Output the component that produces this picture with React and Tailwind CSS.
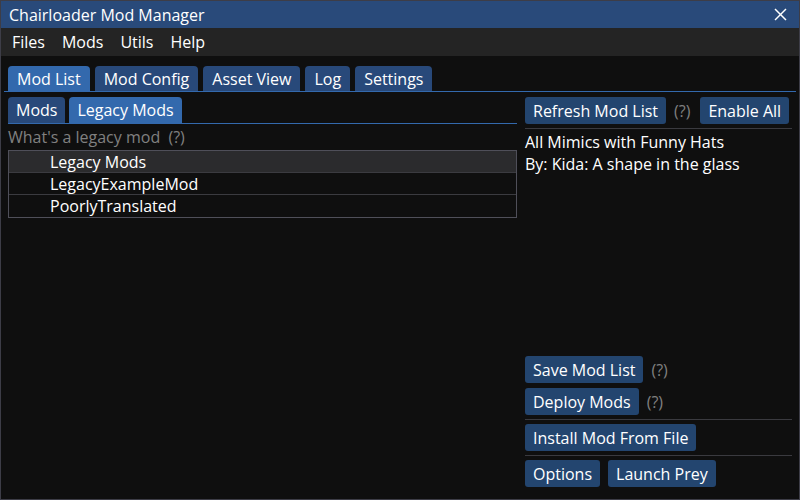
import React from 'react';

const font = { fontFamily: '"Open Sans", "Liberation Sans", sans-serif' };

function Tab({ label, active }) {
  return (
    <div
      className={`h-[25px] px-[9px] flex items-center rounded-t-[4px] text-white ${active ? 'bg-[#3369ad]' : 'bg-[#28497a]'}`}
    >
      {label}
    </div>
  );
}

function Btn({ children }) {
  return (
    <div className="h-[27px] px-2 flex items-center rounded-[3px] bg-[#23456f] text-white whitespace-nowrap">
      {children}
    </div>
  );
}

function Help({ className = 'px-2' }) {
  return <span className={`text-[#808080] ${className}`}>(?)</span>;
}

function Sep() {
  return <div className="h-px bg-[#3a3a3f] my-[4px]" />;
}

export default function App() {
  const rows = ['LegacyExampleMod', 'PoorlyTranslated'];
  return (
    <div className="w-[800px] h-[500px] flex flex-col border border-[#3d3d47] bg-[#0f0f0f] text-[16px] text-white overflow-hidden" style={font}>
      {/* title bar */}
      <div className="h-[27px] shrink-0 bg-[#294a7a] flex items-center justify-between pl-2 pr-3">
        <span>Chairloader Mod Manager</span>
        <svg width="13" height="13" viewBox="0 0 13 13" stroke="#fff" strokeWidth="1.5">
          <line x1="1" y1="1" x2="12" y2="12" />
          <line x1="12" y1="1" x2="1" y2="12" />
        </svg>
      </div>
      {/* menu bar */}
      <div className="h-[28px] shrink-0 bg-[#242424] flex items-center pl-[11px] gap-[17px]">
        <span>Files</span>
        <span>Mods</span>
        <span>Utils</span>
        <span>Help</span>
      </div>
      {/* body */}
      <div className="flex-1 flex flex-col px-[7px] pt-[10px] pb-[12px] min-h-0">
        <div className="flex gap-[5px] border-b border-[#3369ad] -mx-1 px-1">
          <Tab label="Mod List" active />
          <Tab label="Mod Config" />
          <Tab label="Asset View" />
          <Tab label="Log" />
          <Tab label="Settings" />
        </div>
        <div className="flex-1 flex gap-2 pt-[5px] min-h-0">
          {/* left column */}
          <div className="w-[509px] flex flex-col">
            <div className="flex gap-[4px] border-b border-[#3369ad]">
              <div className="h-[26px] px-2 flex items-center rounded-t-[4px] bg-[#28497a]">Mods</div>
              <div className="h-[26px] px-2 flex items-center rounded-t-[4px] bg-[#3369ad]">Legacy Mods</div>
            </div>
            <div className="h-[26px] flex items-center text-[#808080]">What's a legacy mod&nbsp;&nbsp;(?)</div>
            <div className="border border-[#4f4f59]">
              <div className="h-[22px] flex items-center pl-[41px] bg-[#2b2b2d] border-b border-[#3b3b40]">Legacy Mods</div>
              {rows.map((r, i) => (
                <div
                  key={r}
                  className={`h-[22px] flex items-center pl-[41px] ${i === 0 ? 'border-b border-[#3b3b40]' : ''}`}
                >
                  {r}
                </div>
              ))}
            </div>
          </div>
          {/* right column */}
          <div className="flex-1 flex flex-col">
            <div className="flex items-center">
              <Btn>Refresh Mod List</Btn>
              <Help className="pl-2 pr-[10px]" />
              <Btn>Enable All</Btn>
            </div>
            <Sep />
            <div className="leading-[22px] -mt-[2px]">
              <div>All Mimics with Funny Hats</div>
              <div>By: Kida: A shape in the glass</div>
            </div>
            <div className="flex-1" />
            <div className="flex items-center">
              <Btn>Save Mod List</Btn>
              <Help />
            </div>
            <div className="flex items-center mt-[5px]">
              <Btn>Deploy Mods</Btn>
              <Help />
            </div>
            <Sep />
            <div className="flex">
              <Btn>Install Mod From File</Btn>
            </div>
            <Sep />
            <div className="flex gap-2">
              <Btn>Options</Btn>
              <Btn>Launch Prey</Btn>
            </div>
          </div>
        </div>
      </div>
    </div>
  );
}
